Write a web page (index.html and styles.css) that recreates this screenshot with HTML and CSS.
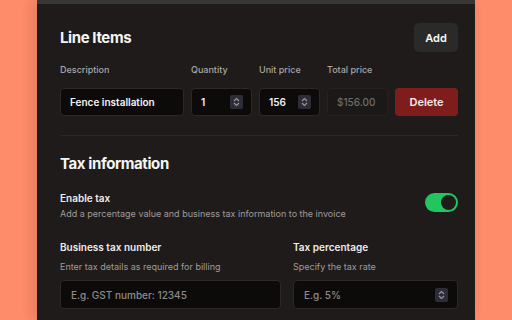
FILE: index.html
```html
<!DOCTYPE html>
<html lang="en">
<head>
  <meta charset="UTF-8">
  <title>Invoice editor</title>
  <link rel="stylesheet" href="styles.css">
</head>
<body>
  <div class="window">
    <div class="titlebar"></div>
    <div class="content">
      <div class="section-head">
        <h2>Line Items</h2>
        <button class="btn-add">Add</button>
      </div>

      <div class="items-row labels">
        <span class="col-desc">Description</span>
        <span class="col-num">Quantity</span>
        <span class="col-num">Unit price</span>
        <span class="col-num">Total price</span>
        <span class="col-act"></span>
      </div>

      <div class="items-row">
        <div class="field col-desc">Fence installation</div>
        <div class="field col-num">1<span class="spin"><svg width="7" height="10" viewBox="0 0 7 10"><path d="M1 4 L3.5 1.5 L6 4 M1 6 L3.5 8.5 L6 6" fill="none" stroke="#9a98a6" stroke-width="1.1"/></svg></span></div>
        <div class="field col-num">156<span class="spin"><svg width="7" height="10" viewBox="0 0 7 10"><path d="M1 4 L3.5 1.5 L6 4 M1 6 L3.5 8.5 L6 6" fill="none" stroke="#9a98a6" stroke-width="1.1"/></svg></span></div>
        <div class="field col-num readonly">$156.00</div>
        <button class="btn-delete col-act">Delete</button>
      </div>

      <hr class="divider">

      <h2 class="tax-title">Tax information</h2>

      <div class="toggle-row">
        <div>
          <div class="item-title">Enable tax</div>
          <div class="hint">Add a percentage value and business tax information to the invoice</div>
        </div>
        <span class="switch"><span class="knob"></span></span>
      </div>

      <div class="tax-grid">
        <div>
          <div class="item-title">Business tax number</div>
          <div class="hint spaced">Enter tax details as required for billing</div>
          <div class="field placeholder">E.g. GST number: 12345</div>
        </div>
        <div>
          <div class="item-title">Tax percentage</div>
          <div class="hint spaced">Specify the tax rate</div>
          <div class="field placeholder">E.g. 5%<span class="spin"><svg width="7" height="10" viewBox="0 0 7 10"><path d="M1 4 L3.5 1.5 L6 4 M1 6 L3.5 8.5 L6 6" fill="none" stroke="#9a98a6" stroke-width="1.1"/></svg></span></div>
        </div>
      </div>
    </div>
  </div>
</body>
</html>
```

FILE: styles.css
```css
body { margin: 0; background-color: #fe8b69; font-family: Inter, "Noto Sans", sans-serif; height: 320px; overflow: hidden; }
.window { margin-left: 37px; width: 438px; height: 320px; background-color: #1e1b1a; box-shadow: -4px 0 12px rgba(0,0,0,0.12); }
.titlebar { height: 4px; background-color: #363637; }
.content { padding: 19px 17px 0 23px; }

h2 { margin: 0; color: #f5f5f4; font-size: 15px; line-height: 22px; font-weight: 700; letter-spacing: -0.4px; }
.section-head { display: flex; justify-content: space-between; align-items: center; margin-bottom: 11px; }
.btn-add { background-color: #2a2a2b; color: #fafafa; border: none; border-radius: 5px; height: 29px; width: 44px; font: 600 11px Inter, sans-serif; padding: 0; }

.items-row { display: flex; gap: 7px; }
.labels { height: 14px; margin-bottom: 11px; font-size: 9px; line-height: 14px; color: #aaa6a4; font-weight: 500; }
.col-desc { width: 124px; }
.col-num { width: 61px; }
.col-act { width: 63px; }

.field { box-sizing: border-box; height: 28px; display: flex; align-items: center; justify-content: space-between; padding: 0 8px 0 9px; background-color: #0d0b0a; border: 1px solid #2b2827; border-radius: 4px; color: #f2f2f2; font-size: 10px; font-weight: 600; }
.field.col-num { padding-left: 9px; padding-right: 8px; }
.readonly { background-color: #1b1918; color: #6f6b69; border-color: #242120; font-weight: 500; }
.spin { display: flex; align-items: center; justify-content: center; width: 13px; height: 14px; background-color: #2e2c37; border-radius: 2px; }
.btn-delete { height: 28px; background-color: #7f1d1d; color: #f5e9e9; border: none; border-radius: 4px; font: 600 11px Inter, sans-serif; padding: 0; }

.divider { border: none; border-top: 1px solid #2a2726; margin: 19px 0 17px; }
.tax-title { margin-bottom: 15px; }

.item-title { color: #efedec; font-size: 10px; line-height: 16px; font-weight: 600; }
.hint { color: #a09c9a; font-size: 9px; line-height: 14px; margin-top: 1px; }
.hint.spaced { margin-top: 5px; margin-bottom: 6px; }

.toggle-row { display: flex; justify-content: space-between; align-items: center; margin-bottom: 18px; }
.switch { display: flex; align-items: center; justify-content: flex-end; width: 33px; height: 19px; box-sizing: border-box; padding: 2px; background-color: #22c55e; border-radius: 10px; margin-top: -7px; }
.knob { width: 15px; height: 15px; border-radius: 50%; background-color: #1e1b1a; }

.tax-grid { display: grid; grid-template-columns: 221px 165px; gap: 12px; }
.tax-grid .field { height: 29px; padding-left: 10px; padding-right: 9px; }
.placeholder { color: #8f8b89; font-size: 10px; font-weight: 500; }
```
